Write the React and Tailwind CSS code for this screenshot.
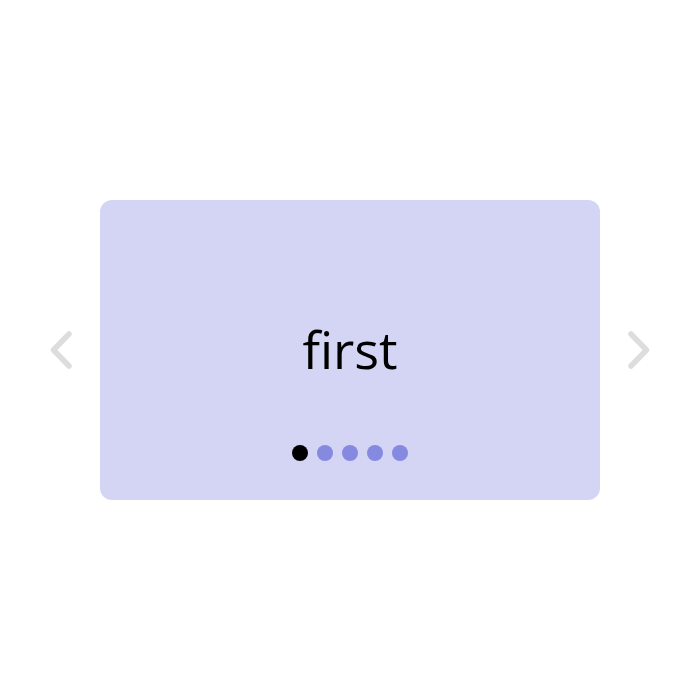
function Chevron({ dir }) {
  return (
    <svg width="28" height="44" viewBox="0 0 28 44" fill="none" stroke="#dddddd" strokeWidth="5.5" strokeLinecap="round" strokeLinejoin="round">
      {dir === "left" ? <path d="M19 6 L3.5 22 L19 38" /> : <path d="M9 6 L24.5 22 L9 38" />}
    </svg>
  );
}

export default function App() {
  return (
    <div className="w-[700px] h-[700px] bg-white flex items-center justify-center">
      <div className="flex items-center gap-[22px]">
        <button className="flex items-center justify-center">
          <Chevron dir="left" />
        </button>
        <div className="relative w-[500px] h-[300px] rounded-[12px] bg-[#d4d5f4] flex items-center justify-center">
          <span className="pb-[2px] text-[52px] font-normal text-black leading-none font-['Open_Sans',sans-serif]">first</span>
          <div className="absolute bottom-[39px] left-0 right-0 flex justify-center gap-[9px]">
            <span className="w-4 h-4 rounded-full bg-black" />
            <span className="w-4 h-4 rounded-full bg-[#8589e0]" />
            <span className="w-4 h-4 rounded-full bg-[#8589e0]" />
            <span className="w-4 h-4 rounded-full bg-[#8589e0]" />
            <span className="w-4 h-4 rounded-full bg-[#8589e0]" />
          </div>
        </div>
        <button className="flex items-center justify-center">
          <Chevron dir="right" />
        </button>
      </div>
    </div>
  );
}
